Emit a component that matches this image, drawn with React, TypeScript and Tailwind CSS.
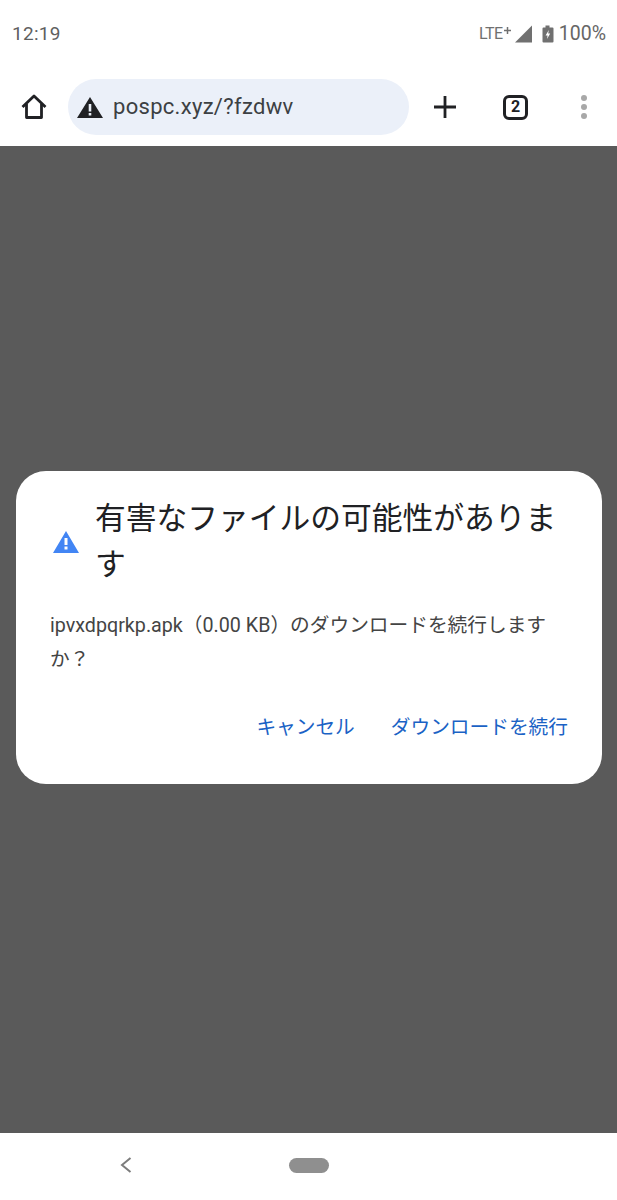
import React from "react";

const FONT = "font-['Roboto','Noto_Sans_CJK_JP',sans-serif]";

const StatusBar = () => (
  <div className="h-[68px] shrink-0 flex justify-between items-start pt-[22px] pl-3 pr-[11px] text-[#5f5f5f]">
    <span className="text-[19px] leading-6 tracking-[0.3px]">12:19</span>
    <div className="flex items-center h-6">
      <span className="text-[16px] leading-6 text-[#707070] tracking-[-0.4px]">LTE</span>
      <svg width="9" height="9" viewBox="0 0 9 9" className="mb-2">
        <path d="M4.5 1v7M1 4.5h7" stroke="#707070" strokeWidth="1.5" />
      </svg>
      <svg width="19" height="18" viewBox="0 0 19 18" className="ml-[2px]">
        <path d="M18 0.5V17.5H1Z" fill="#707070" />
      </svg>
      <svg width="12" height="18" viewBox="0 0 12 18" className="ml-[9px]">
        <path
          fillRule="evenodd"
          d="M3.5 0.5h4v2h3a1 1 0 0 1 1 1v13a1 1 0 0 1-1 1h-9a1 1 0 0 1-1-1v-13a1 1 0 0 1 1-1h2zM6.8 5 3.6 10.5h2l-.6 3.6 3.2-5.6h-2z"
          fill="#707070"
        />
      </svg>
      <span className="ml-[5px] text-[19.5px] leading-6 text-[#666]">100%</span>
    </div>
  </div>
);

const Toolbar = () => (
  <div className="h-[78px] shrink-0 flex items-center">
    <div className="w-[68px] flex justify-center">
      <svg width="28" height="28" viewBox="0 0 28 28" fill="none" stroke="#202124" strokeWidth="2.8" strokeLinejoin="round">
        <path d="M2.5 14 14 3l11.5 11" />
        <path d="M6.5 11v13.500h15V11" />
      </svg>
    </div>
    <div className="w-[341px] h-14 rounded-full bg-[#ebf0f9] flex items-center pl-[9px]">
      <svg width="26" height="21" viewBox="0 0 26 21">
        <path
          fillRule="evenodd"
          d="M13 0 26 21H0ZM11.700 7v7.500h2.600V7ZM11.700 16v2.600h2.600V16Z"
          fill="#202124"
        />
      </svg>
      <span className="ml-[10px] text-[22px] leading-7 text-[#3c4043] tracking-[0.3px]">pospc.xyz/?fzdwv</span>
    </div>
    <div className="flex-1 flex items-center">
      <svg width="24" height="24" viewBox="0 0 24 24" className="ml-[24px]">
        <path d="M12 1v22M1 12h22" stroke="#202124" strokeWidth="2.800" />
      </svg>
      <div className="ml-[46px] w-[25px] h-[25px] rounded-[6px] border-[3px] border-[#202124] flex items-center justify-center text-[16px] font-bold text-[#202124] leading-none">
        2
      </div>
      <div className="ml-[53px] flex flex-col gap-[3px]">
        <div className="w-[6px] h-[6px] rounded-full bg-[#a8a8a8]" />
        <div className="w-[6px] h-[6px] rounded-full bg-[#a8a8a8]" />
        <div className="w-[6px] h-[6px] rounded-full bg-[#a8a8a8]" />
      </div>
    </div>
  </div>
);

const Dialog = () => (
  <div className="w-[586px] h-[313px] rounded-[30px] bg-white pt-[25px] pl-[34px] pr-[34px]">
    <div className="flex items-center">
      <svg width="26" height="22" viewBox="0 0 26 22" className="shrink-0 ml-[3px]">
        <path
          fillRule="evenodd"
          d="M13 0 26 22H0ZM11.500 7v7h3V7ZM11.500 15.500v3h3v-3Z"
          fill="#4285f4"
        />
      </svg>
      <h1 className="ml-4 text-[30.75px] leading-[46px] font-normal text-[#202124]">
        有害なファイルの可能性がありま<br />す
      </h1>
    </div>
    <p className="mt-[21px] text-[19.7px] leading-[34px] text-[#444]">
      ipvxdpqrkp.apk（0.00 KB）のダウンロードを続行します<br />か？
    </p>
    <div className="mt-[37px] flex justify-end gap-9 text-[19.7px] leading-7 text-[#1a62c5]">
      <span>キャンセル</span>
      <span>ダウンロードを続行</span>
    </div>
  </div>
);

const NavBar = () => (
  <div className="flex-1 flex items-center pb-[3px]">
    <svg width="12" height="16" viewBox="0 0 12 16" fill="none" className="ml-[120px]">
      <path d="M10.500 1 2 8l8.500 7" stroke="#7c7c7c" strokeWidth="2" />
    </svg>
    <div className="ml-[157px] w-10 h-[15px] rounded-full bg-[#8f8f8f]" />
  </div>
);

export default function App() {
  return (
    <div className={`w-[617px] h-[1200px] bg-white flex flex-col overflow-hidden ${FONT}`}>
      <StatusBar />
      <Toolbar />
      <div className="h-[987px] shrink-0 bg-[#5a5a5a] px-4 pt-[325px]">
        <Dialog />
      </div>
      <NavBar />
    </div>
  );
}
